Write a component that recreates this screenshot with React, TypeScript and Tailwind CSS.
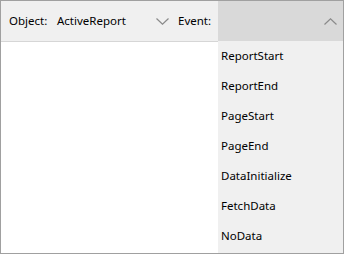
const events = [
  "ReportStart",
  "ReportEnd",
  "PageStart",
  "PageEnd",
  "DataInitialize",
  "FetchData",
  "NoData",
];

function Chevron({ up }: { up?: boolean }) {
  return (
    <svg width="13" height="7" viewBox="0 0 13 7" className="block">
      <polyline
        points={up ? "0.5,6.5 6.5,0.8 12.5,6.5" : "0.5,0.5 6.5,6.2 12.5,0.5"}
        fill="none"
        stroke="#8a8a8a"
        strokeWidth="1.2"
      />
    </svg>
  );
}

export default function App() {
  return (
    <div
      className="w-[344px] h-[254px] border border-[#a0a0a0] flex bg-white text-[11.5px] text-black"
      style={{ fontFamily: '"Noto Sans", sans-serif' }}
    >
      {/* left: object picker + empty area */}
      <div className="flex-1 flex flex-col">
        <div className="h-[41px] bg-[#f0f0f0] border-b border-[#d6d6d6] flex items-center">
          <span className="pl-[8px] w-[56px]">Object:</span>
          <span className="w-[99px]">ActiveReport</span>
          <Chevron />
          <span className="pl-[9px]">Event:</span>
        </div>
        <div className="flex-1" />
      </div>

      {/* right: event dropdown, open */}
      <div className="w-[125px] flex flex-col">
        <div className="h-[40px] bg-[#d9d9d9] flex items-center justify-end pr-[6px]">
          <Chevron up />
        </div>
        <div className="flex-1 bg-[#f0f0f0] pl-[3px]">
          {events.map((e) => (
            <div key={e} className="h-[30px] flex items-center">
              {e}
            </div>
          ))}
        </div>
      </div>
    </div>
  );
}
